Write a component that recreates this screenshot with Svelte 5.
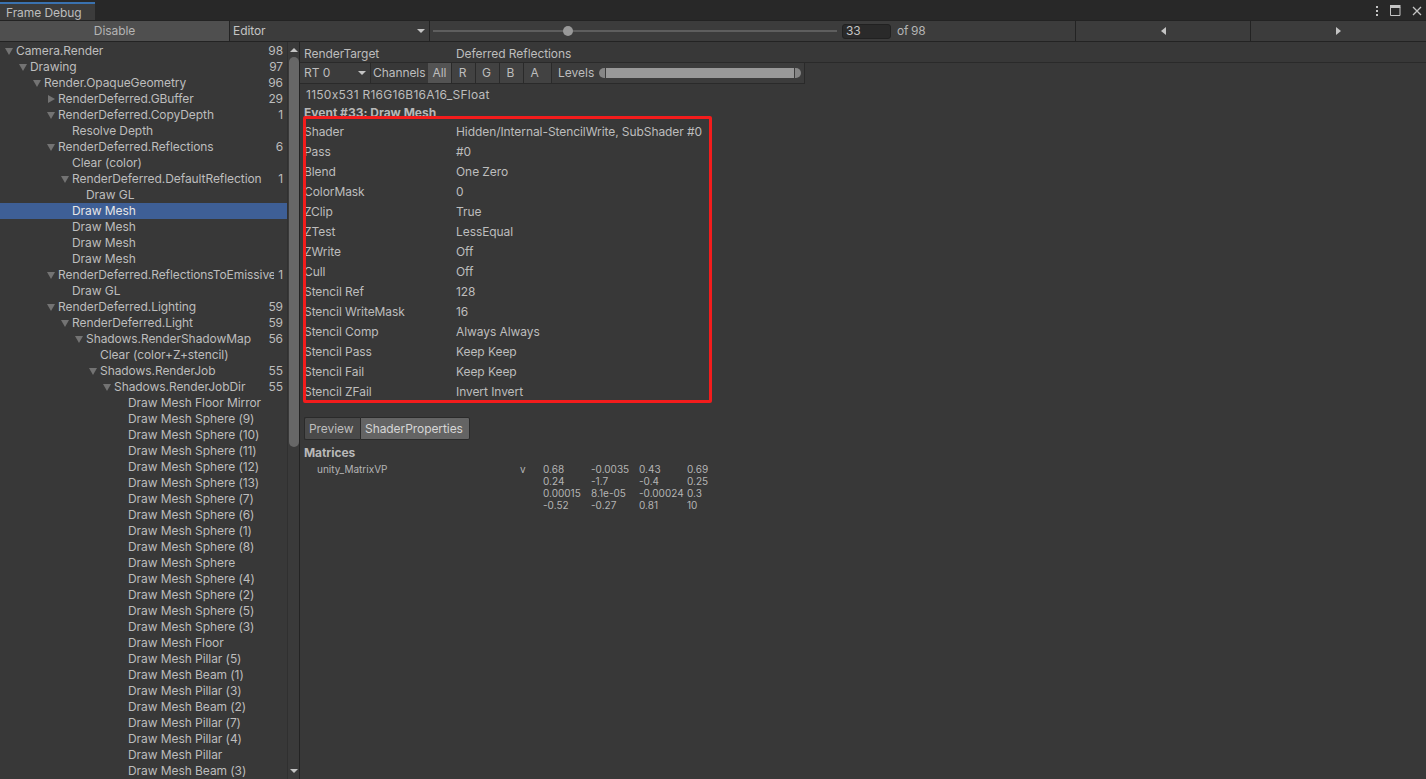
<script>
  const tree = [
    ['Camera.Render', 0, '98', 'open'], ['Drawing', 1, '97', 'open'], ['Render.OpaqueGeometry', 2, '96', 'open'],
    ['RenderDeferred.GBuffer', 3, '29', 'closed'], ['RenderDeferred.CopyDepth', 3, '1', 'open'], ['Resolve Depth', 4],
    ['RenderDeferred.Reflections', 3, '6', 'open'], ['Clear (color)', 4], ['RenderDeferred.DefaultReflection', 4, '1', 'open'],
    ['Draw GL', 5], ['Draw Mesh', 4, '', '', true], ['Draw Mesh', 4], ['Draw Mesh', 4], ['Draw Mesh', 4],
    ['RenderDeferred.ReflectionsToEmissive', 3, '1', 'open'], ['Draw GL', 4], ['RenderDeferred.Lighting', 3, '59', 'open'],
    ['RenderDeferred.Light', 4, '59', 'open'], ['Shadows.RenderShadowMap', 5, '56', 'open'], ['Clear (color+Z+stencil)', 6],
    ['Shadows.RenderJob', 6, '55', 'open'], ['Shadows.RenderJobDir', 7, '55', 'open'],
    ...['Floor Mirror', 'Sphere (9)', 'Sphere (10)', 'Sphere (11)', 'Sphere (12)', 'Sphere (13)', 'Sphere (7)', 'Sphere (6)',
      'Sphere (1)', 'Sphere (8)', 'Sphere', 'Sphere (4)', 'Sphere (2)', 'Sphere (5)', 'Sphere (3)', 'Floor', 'Pillar (5)',
      'Beam (1)', 'Pillar (3)', 'Beam (2)', 'Pillar (7)', 'Pillar (4)', 'Pillar', 'Beam (3)'].map((n) => ['Draw Mesh ' + n, 8])
  ];
  const props = [
    ['Shader', 'Hidden/Internal-StencilWrite, SubShader #0'], ['Pass', '#0'], ['Blend', 'One Zero'], ['ColorMask', '0'],
    ['ZClip', 'True'], ['ZTest', 'LessEqual'], ['ZWrite', 'Off'], ['Cull', 'Off'], ['Stencil Ref', '128'],
    ['Stencil WriteMask', '16'], ['Stencil Comp', 'Always Always'], ['Stencil Pass', 'Keep Keep'],
    ['Stencil Fail', 'Keep Keep'], ['Stencil ZFail', 'Invert Invert']
  ];
  const matrix = [
    ['0.68', '-0.0035', '0.43', '0.69'], ['0.24', '-1.7', '-0.4', '0.25'],
    ['0.00015', '8.1e-05', '-0.00024', '0.3'], ['-0.52', '-0.27', '0.81', '10']
  ];
  const depthClass = (d) => 'depth' + d;
</script>

<div class="window">
  <header class="tabbar">
    <div class="tab">Frame Debug</div>
    <div class="winicons">
      <svg width="4" height="12" viewBox="0 0 4 12"><path d="M1 1h2v2H1zM1 5h2v2H1zM1 9h2v2H1z" fill="#c4c4c4"/></svg>
      <svg width="11" height="11" viewBox="0 0 11 11"><path d="M.5 2.5h9.5v8H.5z" fill="none" stroke="#c4c4c4"/><path d="M0 0h10.5v3H0z" fill="#c4c4c4"/></svg>
      <svg width="10" height="10" viewBox="0 0 10 10"><path d="M1 1l8 8M9 1l-8 8" fill="none" stroke="#c4c4c4" stroke-width="1.3"/></svg>
    </div>
  </header>

  <div class="toolbar">
    <div class="disable">Disable</div>
    <div class="editor">Editor <span class="caret"></span></div>
    <div class="sliderbox">
      <div class="track"><span class="thumb"></span></div>
      <div class="num">33</div>
      <div class="of">of 98</div>
    </div>
    <div class="nav"><span class="tri left"></span></div>
    <div class="nav"><span class="tri right"></span></div>
  </div>

  <div class="main">
    <aside class="treewrap">
      <div class="tree">
        {#each tree as [name, d, count, arrow, selected]}
          <div class="row {depthClass(d)}" class:selected>
            {#if arrow}<span class="arrow {arrow}"></span>{/if}
            <span class="label">{name}</span>
            {#if count}<span class="count">{count}</span>{/if}
          </div>
        {/each}
      </div>
      <div class="scrollbar">
        <span class="up"></span>
        <span class="sthumb"></span>
        <span class="down"></span>
      </div>
    </aside>

    <section class="detail">
      <div class="rtrow"><span class="key">RenderTarget</span><span>Deferred Reflections</span></div>
      <div class="chanbar">
        <div class="rt">RT 0 <span class="caret"></span></div>
        <div class="chanlabel">Channels</div>
        <div class="chan on">All</div>
        <div class="chan">R</div>
        <div class="chan">G</div>
        <div class="chan">B</div>
        <div class="chan lastchan">A</div>
        <div class="levels">
          <span>Levels</span>
          <div class="range"><i class="cap l"></i><b></b><i class="cap r"></i></div>
        </div>
      </div>
      <div class="format">1150x531 R16G16B16A16_SFloat</div>
      <div class="event">Event #33: Draw Mesh</div>
      <div class="props">
        {#each props as [k, v]}
          <div class="prop"><span class="key">{k}</span><span>{v}</span></div>
        {/each}
        <div class="redbox"></div>
      </div>
      <div class="tabs">
        <div class="t">Preview</div>
        <div class="t on">ShaderProperties</div>
      </div>
      <div class="matrices">Matrices</div>
      <div class="mat">
        <span class="mname">unity_MatrixVP</span>
        <span class="mv">v</span>
        <div class="mgrid">
          {#each matrix as r}
            {#each r as c}<span>{c}</span>{/each}
          {/each}
        </div>
      </div>
    </section>
  </div>
</div>

<style>
  :global(body) { margin: 0; background: #383838; }
  .window {
    width: 1426px; height: 779px; overflow: hidden; display: flex; flex-direction: column;
    background: #383838; color: #c4c4c4; font: 12px/16px Inter, "Liberation Sans", sans-serif;
    letter-spacing: -0.07px; font-feature-settings: "calt" 0;
  }
  .tabbar { height: 20px; flex: none; background: #282828; display: flex; justify-content: space-between; }
  .tab {
    width: 95px; box-sizing: border-box; height: 18px; margin-top: 2px; background: #3c3c3c; border-top: 2px solid #3a72b0;
    padding: 2px 0 0 6px; line-height: 14px; color: #bdbdbd;
  }
  .winicons { display: flex; align-items: center; gap: 11px; padding: 1px 4px 0 0; }
  .toolbar {
    height: 22px; flex: none; box-sizing: border-box; display: flex; background: #3c3c3c;
    border-top: 1px solid #232323; border-bottom: 1px solid #232323;
  }
  .disable {
    width: 229px; text-align: center; background: #4f4f4f; border-right: 1px solid #232323; line-height: 20px; color: #b4b4b4;
  }
  .editor {
    width: 200px; position: relative; padding-left: 3px; box-sizing: border-box; line-height: 20px;
    border-right: 1px solid #232323;
  }
  .caret {
    position: absolute; right: 4px; top: 8px; width: 0; height: 0;
    border-left: 4px solid transparent; border-right: 4px solid transparent; border-top: 4px solid #c4c4c4;
  }
  .sliderbox { width: 646px; display: flex; align-items: center; border-right: 1px solid #232323; box-sizing: border-box; }
  .track { width: 404px; margin-left: 3px; height: 2px; background: #5e5e5e; position: relative; }
  .thumb {
    position: absolute; left: 130px; top: -4px; width: 10px; height: 10px; border-radius: 50%; background: #999;
  }
  .num {
    width: 49px; height: 15px; margin-left: 5px; box-sizing: border-box; background: #2a2a2a; border: 1px solid #212121;
    border-radius: 3px; padding-left: 3px; line-height: 12px;
  }
  .of { margin-left: 6px; color: #b4b4b4; letter-spacing: -0.3px; }
  .nav { width: 175px; display: flex; align-items: center; justify-content: center; border-right: 1px solid #232323; box-sizing: border-box; }
  .nav:last-child { border-right: 0; flex: 1; }
  .tri { width: 0; height: 0; border-top: 4px solid transparent; border-bottom: 4px solid transparent; }
  .tri.left { border-right: 5px solid #c4c4c4; }
  .tri.right { border-left: 5px solid #c4c4c4; }
  .main { flex: 1; display: flex; min-height: 0; }
  .treewrap { width: 300px; flex: none; display: flex; box-sizing: border-box; border-right: 1px solid #232323; overflow: hidden; }
  .tree { width: 287px; padding-top: 1px; flex: none; overflow: hidden; }
  .row { height: 16px; line-height: 16px; position: relative; white-space: nowrap; color: #bdbdbd; }
  .row.selected { background: #3e5f96; color: #e6e6e6; }
  .depth0 { padding-left: 16px; } .depth1 { padding-left: 30px; } .depth2 { padding-left: 44px; }
  .depth3 { padding-left: 58px; } .depth4 { padding-left: 72px; } .depth5 { padding-left: 86px; }
  .depth6 { padding-left: 100px; } .depth7 { padding-left: 114px; } .depth8 { padding-left: 128px; }
  .label { display: block; max-width: 216px; overflow: hidden; }
  .depth4 .label { max-width: 202px; }
  .depth5 .label { max-width: 188px; }
  .count { position: absolute; right: 4px; top: 0; background: #383838; padding-left: 2px; }
  .arrow { position: absolute; width: 0; height: 0; }
  .arrow.open { top: 5px; margin-left: -11px; border-left: 4.5px solid transparent; border-right: 4.5px solid transparent; border-top: 7px solid #737373; }
  .arrow.closed { top: 4px; margin-left: -10px; border-top: 4.5px solid transparent; border-bottom: 4.5px solid transparent; border-left: 7px solid #737373; }
  .scrollbar { width: 12px; position: relative; flex: 1; background: #3a3a3a; border-left: 1px solid #303030; }
  .up, .down { position: absolute; left: 2px; width: 0; height: 0; border-left: 4px solid transparent; border-right: 4px solid transparent; }
  .up { top: 6px; border-bottom: 4px solid #c4c4c4; }
  .down { bottom: 6px; border-top: 4px solid #c4c4c4; }
  .sthumb { position: absolute; left: 1px; top: 15px; width: 10px; height: 390px; background: #676767; border-radius: 5px; }
  .detail { flex: 1; position: relative; color: #bdbdbd; }
  .rtrow { height: 21px; box-sizing: border-box; padding: 4px 0 0 4px; display: flex; border-bottom: 1px solid #2a2a2a; }
  .key { width: 152px; flex: none; }
  .chanbar { height: 21px; box-sizing: border-box; display: flex; border-bottom: 1px solid #2a2a2a; line-height: 20px; width: 505px; }
  .rt { width: 71px; flex: none; box-sizing: border-box; position: relative; padding-left: 4px; background: #3c3c3c; border-right: 1px solid #2a2a2a; }
  .chanlabel { width: 57px; padding-left: 2px; box-sizing: border-box; flex: none; }
  .chan { width: 24px; flex: none; text-align: center; padding-right: 2px; background: #424242; border-right: 1px solid #2a2a2a; box-sizing: border-box; }
  .chan.on { background: #535353; padding-right: 0; }
  .chan.lastchan { width: 28px; padding-right: 6px; }
  .levels { flex: 1; display: flex; align-items: center; padding-left: 6px; border-right: 1px solid #2a2a2a; background: #3c3c3c; letter-spacing: 0; }
  .range { width: 202px; margin-left: 5px; height: 10px; display: flex; align-items: center; gap: 1px; }
  .range b { flex: 1; height: 10px; background: #999; }
  .cap { width: 6px; height: 10px; background: #868686; }
  .cap.l { border-radius: 5px 0 0 5px; }
  .cap.r { border-radius: 0 5px 5px 0; }
  .format { padding: 3px 0 0 6px; height: 19px; box-sizing: border-box; letter-spacing: 0.26px; }
  .event { padding-left: 4px; font-weight: 700; height: 17px; margin-top: 2px; letter-spacing: 0; color: #b8b8b8; }
  .props { position: relative; padding-left: 4px; }
  .prop { height: 20px; line-height: 20px; display: flex; }
  .redbox {
    position: absolute; left: 3px; top: -6px; width: 409px; height: 287px; box-sizing: border-box;
    border: 3px solid #f31c1c; border-radius: 2px; pointer-events: none;
  }
  .tabs { display: flex; margin: 15px 0 0 4px; height: 23px; }
  .t {
    width: 56px; padding-left: 4px; line-height: 22px; background: #4a4a4a; border: 1px solid #2a2a2a; border-right: 0; border-radius: 2px 0 0 2px; box-sizing: border-box; height: 23px;
  }
  .t.on { width: 110px; background: #646464; color: #d6d6d6; padding-left: 4px; border-right: 1px solid #2a2a2a; border-radius: 0 2px 2px 0; }
  .matrices { padding-left: 4px; font-weight: 700; margin-top: 5px; height: 16px; color: #b8b8b8; }
  .mat { display: flex; font-size: 10px; line-height: 12px; margin-top: 2px; padding-left: 17px; letter-spacing: 0; color: #b4b4b4; }
  .mname { width: 203px; flex: none; }
  .mv { width: 23px; flex: none; }
  .mgrid { display: grid; grid-template-columns: 48px 48px 48px 48px; }
</style>
